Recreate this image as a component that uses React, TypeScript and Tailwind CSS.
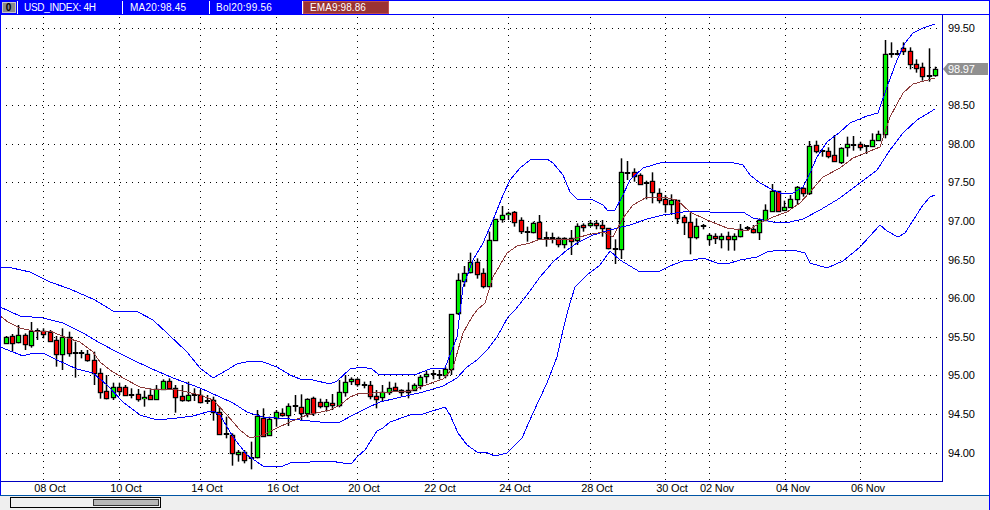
type C = [number, number, number, number, string];

const g1: C[] = [
  [108,130,112,128,'g'],[102,155,108,128,'r'],[75,130,105,127,'g'],[100,150,105,133,'r'],[66,143,92,136,'g'],
  [85,120,92,92,'d'],[85,115,92,103,'r'],[90,125,97,122,'r'],[108,200,121,163,'r'],[85,210,110,163,'g'],
  [95,170,110,160,'r'],[125,233,158,158,'d'],[150,175,160,160,'d'],[150,185,163,181,'r'],[155,255,181,220,'r'],
  [205,296,220,275,'r'],[225,298,274,295,'r'],[248,300,260,291,'g'],[248,285,262,274,'r'],[255,288,261,286,'r'],
  [265,295,285,285,'d'],[267,305,283,298,'r'],[272,320,290,295,'g'],[265,298,286,296,'r'],[255,298,268,296,'g'],
  [238,268,244,266,'g'],[235,268,242,265,'r'],[255,338,265,290,'r'],[255,305,289,299,'r'],[245,305,286,301,'g'],
  [265,303,285,285,'d'],[270,310,284,305,'r'],[285,312,302,302,'d'],[290,362,301,337,'r'],[320,405,337,403,'r'],
  [350,415,402,402,'d'],[400,497,406,460,'r'],[450,485,457,463,'g'],[450,490,457,481,'r'],[425,508,474,474,'d'],
  [330,475,349,472,'g'],[325,410,355,409,'r'],[350,408,357,406,'g'],[330,380,337,353,'g'],[325,350,340,346,'r'],
  [310,378,319,346,'g'],[285,335,318,318,'d'],[283,360,322,340,'r'],[295,352,297,340,'g'],[290,348,295,338,'r'],
  [296,325,305,319,'r'],[297,335,307,319,'g'],
];
const g2: C[] = [
  [282,330,310,316,'r'],[240,322,277,316,'g'],[225,290,247,277,'g'],[232,255,238,244,'g'],[235,260,238,253,'r'],
  [245,265,254,254,'d'],[243,298,256,289,'r'],[270,325,289,296,'r'],[255,305,277,291,'g'],[245,285,265,277,'g'],
  [248,275,262,271,'r'],[268,290,271,276,'r'],[247,295,271,277,'r'],[250,272,256,270,'g'],[225,268,230,256,'g'],
  [212,250,223,229,'g'],[210,238,222,222,'d'],[210,238,225,225,'d'],[200,235,208,226,'g'],[43,225,43,208,'g'],
];
const g3: C[] = [
  [400,525,421,519,'g'],[378,440,400,424,'g'],[338,400,367,397,'g'],[355,416,367,403,'r'],[385,445,400,437,'r'],
  [275,442,301,437,'g'],[238,303,238,301,'g'],[198,248,226,238,'g'],[215,240,218,223,'g'],[213,260,217,245,'r'],
  [232,282,241,274,'r'],[260,305,275,275,'d'],[245,280,250,277,'g'],[225,298,247,295,'r'],[275,320,293,293,'d'],
  [278,310,293,293,'d'],[290,322,295,313,'r'],[292,325,295,313,'g'],[270,345,295,304,'r'],[250,315,259,301,'g'],
  [250,275,256,262,'r'],[240,260,250,256,'g'],[240,268,250,256,'r'],[240,290,256,265,'r'],[265,328,265,325,'r'],
  [298,372,327,327,'d'],[55,357,97,328,'g'],[63,120,98,98,'d'],[85,125,97,107,'r'],[100,133,105,131,'r'],
  [122,178,128,128,'d'],[97,190,124,157,'r'],[145,190,160,181,'r'],[165,218,178,192,'r'],[163,225,181,193,'g'],
  [180,252,181,235,'r'],[225,285,232,247,'r'],[218,343,247,290,'r'],[235,298,259,290,'g'],[252,268,257,257,'d'],
  [280,316,286,298,'g'],[280,312,289,295,'r'],[280,325,289,298,'g'],[275,332,289,298,'r'],[280,332,289,298,'g'],
  [252,292,268,289,'g'],[258,272,265,265,'d'],[255,280,266,277,'r'],
];
const g4: C[] = [
  [625,690,631,666,'g'],[583,633,601,631,'g'],[522,604,544,602,'g'],[544,603,544,602,'r'],[572,603,590,601,'g'],
  [555,592,568,590,'g'],[528,585,532,568,'g'],[532,560,535,548,'r'],[393,555,409,548,'g'],[392,430,406,424,'r'],
  [420,440,423,423,'d'],[412,445,422,437,'r'],[375,456,436,454,'r'],[412,462,415,456,'g'],[380,440,403,412,'g'],
  [378,422,404,404,'d'],[395,422,403,412,'r'],[405,432,408,408,'d'],[370,410,391,407,'g'],[362,393,373,391,'g'],
  [90,385,133,373,'g'],[97,143,133,133,'d'],[120,136,131,131,'d'],[97,135,115,124,'r'],[112,178,124,163,'r'],
  [148,188,163,173,'r'],[158,212,172,199,'r'],[115,215,198,198,'d'],[170,200,178,196,'g'],
];

const scale = (g: C[], off: number): C[] =>
  g.map(([a, b, c, d, k]) => [off + a / 3, off + b / 3, off + c / 3, off + d / 3, k] as C);

const candles: C[] = [...scale(g1, 300), ...scale(g2, 300), ...scale(g3, 140), ...scale(g4, 10)];

const upper = "0,267 12,268 30,272 50,282 70,289 95,300 113,311 138,312 153,320 167,333 187,352 200,368 213,378 227,370 237,364 250,361 263,362 277,367 290,375 300,379 313,380 330,384 337,381 350,369 362,367 372,369 378,374 397,375 417,374 430,369 445,368 450,355 457,337 463,287 473,260 483,243 493,220 503,195 510,180 520,168 530,160 547,159 553,163 563,175 570,192 577,199 593,200 603,205 608,211 615,210 622,197 630,180 643,168 663,162 697,162 730,162 743,165 750,175 760,183 773,190 783,194 793,193 803,187 810,173 817,157 827,142 840,132 850,123 867,116 878,113 887,87 897,60 905,43 913,33 923,28 935,24";
const middle = "0,307 20,316 43,318 63,323 83,333 100,343 117,352 133,360 150,368 173,378 200,388 220,397 233,403 247,412 263,417 290,419 330,423 340,422 353,415 367,408 380,402 397,398 423,392 443,386 457,378 467,367 477,360 487,350 497,337 508,317 515,310 527,295 540,277 553,262 567,250 577,243 593,235 607,231 617,228 630,225 647,219 663,215 690,211 710,212 730,212 743,212 753,218 773,222 790,222 803,219 820,210 840,198 860,183 877,170 890,150 903,133 917,120 935,109";
const lower = "0,347 13,352 23,356 33,353 43,353 57,360 77,369 93,373 107,385 123,402 140,415 157,420 177,418 193,416 207,412 213,411 220,415 233,437 247,455 263,466 283,466 290,463 330,461 343,463 352,463 358,456 365,450 377,431 383,428 390,422 410,415 423,414 445,407 450,415 458,433 467,445 477,452 485,452 495,456 507,453 522,438 533,413 547,383 557,357 563,330 568,310 575,287 587,275 600,265 610,251 620,260 640,272 660,271 670,266 683,261 693,260 703,258 717,263 727,264 740,260 757,257 767,252 780,250 793,250 805,253 810,263 827,268 843,261 860,247 880,225 887,231 898,237 905,233 923,205 930,197 935,195";
const ema = "0,316 8,322 20,328 33,331 50,331 67,338 80,342 93,352 100,362 110,370 123,378 140,387 150,389 173,389 187,392 200,395 213,400 227,415 240,430 250,438 263,435 277,428 290,422 307,415 330,410 340,405 350,397 360,393 373,393 390,392 410,391 423,386 443,379 453,368 458,350 463,333 472,317 477,310 485,303 493,277 507,253 517,246 530,243 540,239 573,239 587,235 603,232 613,237 623,218 633,205 647,197 663,197 677,200 690,212 707,220 727,228 747,231 760,223 773,217 787,212 800,203 810,192 823,177 840,168 853,158 880,147 890,117 903,93 913,84 935,78";

const vGrid = [43, 119, 200, 276, 357, 433, 508, 590, 665, 709, 785, 860];
const dates: [string, number][] = [
  ["08 Oct", 50], ["10 Oct", 126], ["14 Oct", 207], ["16 Oct", 283], ["20 Oct", 364], ["22 Oct", 440],
  ["24 Oct", 515], ["28 Oct", 597], ["30 Oct", 672], ["02 Nov", 717], ["04 Nov", 793], ["06 Nov", 868],
];
const rows = Array.from({ length: 12 }, (_, i) => Math.round(28 + 38.6 * i));
const prices = ["99.50", "", "98.50", "98.00", "97.50", "97.00", "96.50", "96.00", "95.50", "95.00", "94.50", "94.00"];

const fill = (k: string) => (k === "g" ? "#00f000" : "#f00000");

function Chart() {
  return (
    <svg viewBox="1 15 988 480" className="block w-[988px] h-[480px]">
      {rows.map((y) => (
        <line key={y} x1={6} x2={942} y1={y + 0.5} y2={y + 0.5} stroke="#000" strokeDasharray="1 5" shapeRendering="crispEdges" />
      ))}
      {vGrid.map((x) => (
        <line key={x} x1={x + 0.5} x2={x + 0.5} y1={17} y2={481} stroke="#000" strokeDasharray="1 5" shapeRendering="crispEdges" />
      ))}
      <g>
        {candles.map(([hi, lo, top, bottom, k], i) => {
          const x = Math.floor(6.33 + 6.277 * i);
          const t = Math.round(top);
          const b = Math.round(bottom);
          return (
            <g key={i}>
              <rect x={x - 0.25} y={hi} width={1.5} height={lo - hi} fill="#000" />
              {k === "d" ? (
                <rect x={x - 2.2} y={t - 1} width={5.4} height={2} fill="#000" />
              ) : (
                <>
                  <rect x={x - 2.2} y={t - 0.2} width={5.4} height={b - t + 1.4} fill="#000" />
                  <rect x={x - 1} y={t + 1} width={3} height={Math.max(b - t - 1, 1)} fill={fill(k)} />
                </>
              )}
            </g>
          );
        })}
      </g>
      <g fill="none" strokeWidth={1} shapeRendering="crispEdges">
        <polyline points={upper} stroke="#0000ff" />
        <polyline points={middle} stroke="#0000ff" />
        <polyline points={lower} stroke="#0000ff" />
        <polyline points={ema} stroke="#8b3a3a" />
      </g>
      <path d="M942.5 15V481.5H0" fill="none" stroke="#0000c0" strokeWidth={1} shapeRendering="crispEdges" />
      <path d="M943 69L948 63H988V75H948Z" fill="#909090" />
      <g fontSize={11} fill="#000" letterSpacing={-0.15}>
        {prices.map((p, i) =>
          p ? (
            <text key={p} x={948} y={rows[i] + 4}>
              {p}
            </text>
          ) : null
        )}
        <text x={948} y={73} fill="#fff">98.97</text>
        {dates.map(([d, x]) => (
          <text key={d} x={x} y={492} textAnchor="middle">
            {d}
          </text>
        ))}
      </g>
    </svg>
  );
}

export default function App() {
  return (
    <div className="w-[990px] h-[510px] bg-white border-r border-[#0000ff] flex flex-col overflow-hidden font-['Liberation_Sans',sans-serif] text-[10px] leading-none">
      <div className="h-[15px] flex border-t border-b border-[#0000ff] shrink-0">
        <div className="w-[389px] bg-[#0000ff] flex items-stretch text-white">
          <div className="w-[18px] flex items-center justify-center border-r border-white">
            <div className="w-[14px] h-[11px] bg-[#8a8a8a] border border-[#c8c8c8] flex items-center justify-center text-black font-bold text-[10px]">
              0
            </div>
          </div>
          <div className="w-[105px] pl-[6px] flex items-center border-r border-white tracking-[-0.3px]">USD_INDEX: 4H</div>
          <div className="w-[87px] pl-[7px] flex items-center border-r border-white tracking-[0.25px]">MA20:98.45</div>
          <div className="w-[93px] pl-[6px] flex items-center border-r border-white tracking-[0.25px]">Bol20:99.56</div>
          <div className="flex-1 pl-[6px] flex items-center bg-[#9b3333] border border-[#c05050] tracking-[0.1px]">EMA9:98.86</div>
        </div>
      </div>
      <div className="h-[480px] border-l border-[#0000ff] shrink-0">
        <Chart />
      </div>
      <div className="flex-1 bg-[#efefef] border-t border-[#0055a5] pl-[10px] pt-[1px]">
        <div className="w-[151px] h-[11px] border border-black bg-[#f0f0f0] flex justify-end items-center pr-[1px]">
          <div className="w-[66px] h-[7px] bg-[#b8b8b8] border border-[#333]" />
        </div>
      </div>
    </div>
  );
}
